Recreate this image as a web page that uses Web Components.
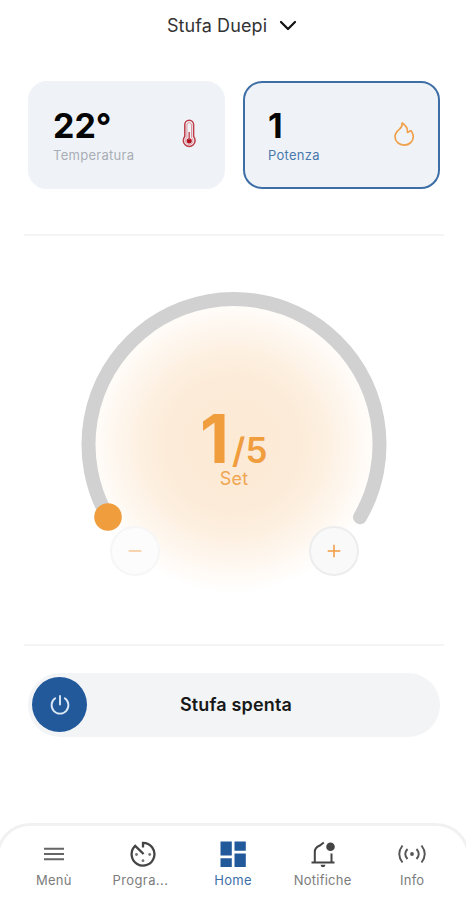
<!DOCTYPE html>
<html lang="it">
<head>
<meta charset="utf-8">
<title>Stufa Duepi</title>
<style>
html,body{margin:0;height:100%;background:#fff}
body{font-family:Inter,"Liberation Sans",sans-serif;overflow:hidden}
</style>
</head>
<body>
<stove-app></stove-app>
<script>
const define = (name, html) => {
  const t = document.createElement('template');
  t.innerHTML = html;
  customElements.define(name, class extends HTMLElement {
    constructor() {
      super();
      this.attachShadow({ mode: 'open' }).appendChild(t.content.cloneNode(true));
    }
  });
};

define('device-header', `
<style>
:host{display:flex;justify-content:center;align-items:center;height:52px;gap:12px;padding-right:2px;box-sizing:border-box;color:#333;font-size:18px;line-height:22px;letter-spacing:.1px}
svg{display:block}
</style>
<span><slot></slot></span>
<svg width="18" height="12" viewBox="0 0 18 12" fill="none" stroke="#111" stroke-width="2.2" stroke-linecap="round" stroke-linejoin="round"><path d="M2 2l7 7 7-7"/></svg>`);

define('stat-card', `
<style>
:host{display:flex;box-sizing:border-box;height:108px;border-radius:19px;background:#eff3f7;border:2px solid #eff3f7;padding:0 19px 0 23px;align-items:center;justify-content:space-between;color:#a9adb5}
:host([active]){border-color:#3d6fa6;color:#4a78ad}
.t{padding-top:2px}
.v{color:#050505;font-size:34px;line-height:36px;font-weight:700}
.l{font-size:13px;line-height:18px;letter-spacing:.28px;margin-top:2px}
::slotted([slot=icon]){margin-bottom:3px}
</style>
<div class="t"><div class="v"><slot name="value"></slot></div><div class="l"><slot></slot></div></div>
<slot name="icon"></slot>`);

define('thermo-icon', `
<style>:host{display:block}svg{display:block}</style>
<svg width="30" height="30" viewBox="0 0 30 30" fill="none" stroke="#bd3c48" stroke-width="1.500"><path d="M10.8 17.600V5.700a4.400 4.400 0 0 1 8.800 0v11.900a5.900 5.900 0 1 1-8.800 0z"/><path d="M12.900 18.600V6a2.300 2.300 0 0 1 4.600 0v12.600a3.800 3.800 0 1 1-4.600 0z" stroke-width=".9" stroke="#d98a91"/><circle cx="15.200" cy="21.800" r="2.600" fill="#b4101f" stroke="none"/><path d="M15.200 13v8" stroke="#c4525d" stroke-width="1.500"/></svg>`);

define('flame-icon', `
<style>:host{display:block}svg{display:block}</style>
<svg width="30" height="30" viewBox="0 0 30 30" fill="none" stroke="#f0a04b" stroke-width="1.700" stroke-linejoin="round" stroke-linecap="round"><path d="M13.200 4c.3 2.500-.8 4.300-2.700 6.100C8.200 12.100 6 14.100 6 17.500c0 5.100 4 8.600 9.100 8.600s9.200-3.500 9.200-8.300c0-2.700-.9-4.200-2.200-6.200l-3.600 1.800c.3-4.200-1.600-7.100-5.300-9.400z"/></svg>`);

define('round-button', `
<style>
:host{display:grid;place-items:center;box-sizing:border-box;width:50px;height:50px;border-radius:50%;border:2px solid #ededee;background:#f9f9fa}
:host([disabled]){border-color:#f7f6f6;background:#fdfcfc}
:host([disabled]) svg{opacity:.55}
:host([disabled]) .up{display:none}
svg{display:block}
</style>
<svg width="14" height="14" viewBox="0 0 14 14" stroke="#f0a04b" stroke-width="1.600"><path d="M.7 7h12.600"/><path class="up" d="M7 .7v12.600"/></svg>`);

define('power-dial', `
<style>
:host{display:grid;grid-template:310px / 310px;justify-content:center;height:408px;box-sizing:border-box;padding:53px 0 0 2px}
svg,.c,.b{grid-area:1/1}
svg{display:block;overflow:visible}
.c{display:flex;flex-direction:column;align-items:center;padding-top:121px;color:#f09d3e;z-index:1}
.n{display:flex;align-items:baseline;font-weight:700;height:58px;line-height:58px}
.big{font-size:67px}
.sm{font-size:35px;font-weight:600;letter-spacing:.3px;margin-left:3px;line-height:36px}
.s{font-size:18px;line-height:20px;margin-top:1px;color:#f0a551;letter-spacing:.2px}
.b{display:flex;justify-content:space-between;align-items:flex-start;padding:237px 30px 0 31px;z-index:1}
</style>
<svg width="310" height="310" viewBox="0 0 310 310">
<defs><radialGradient id="g"><stop offset="0" stop-color="#fcead5"/><stop offset=".45" stop-color="#fcebd8"/><stop offset=".62" stop-color="#fdf0e1"/><stop offset=".8" stop-color="#fef7ef"/><stop offset=".93" stop-color="#fffcf9"/><stop offset="1" stop-color="#fff"/></radialGradient></defs>
<circle cx="154" cy="155" r="149" fill="url(#g)"/>
<path d="M29 228.250A145.500 145.500 0 1 1 281 228.250" fill="none" stroke="#d1d1d1" stroke-width="14" stroke-linecap="round"/>
<circle cx="29" cy="228" r="13.800" fill="#f09d3e"/>
</svg>
<div class="c"><div class="n"><span class="big">1</span><span class="sm">/5</span></div><div class="s">Set</div></div>
<div class="b"><round-button disabled></round-button><round-button></round-button></div>`);

define('power-slider', `
<style>
:host{display:grid;grid-template-columns:55px 1fr 51px;align-items:center;height:64px;box-sizing:border-box;padding:0 4px 1px;border-radius:32px;background:#f2f4f6}
.k{width:55px;height:55px;border-radius:50%;background:#22599b;display:grid;place-items:center}
.t{text-align:center;font-size:18px;font-weight:600;color:#181818;letter-spacing:.15px}
svg{display:block}
</style>
<div class="k"><svg width="22" height="22" viewBox="0 0 22 22" fill="none" stroke="#dbe8f5" stroke-width="1.900" stroke-linecap="round"><path d="M11 2v8.500M6.200 4.300a8.400 8.400 0 1 0 9.600 0"/></svg></div>
<div class="t"><slot></slot></div>`);

define('nav-item', `
<style>
:host{display:flex;flex-direction:column;align-items:center;gap:3px;color:#7c7c7c;font-size:13px;line-height:18px;letter-spacing:.25px;white-space:nowrap}
:host([active]){color:#3e70a8}
:host([clipped]) span{margin-right:6px;letter-spacing:.4px}
::slotted(svg){display:block}
</style>
<slot name="icon"></slot><span><slot></slot></span>`);

define('nav-bar', `
<style>
:host{display:grid;grid-template-columns:repeat(5,89.600px);justify-content:center;box-sizing:border-box;height:77px;margin:0 -4px;border:3px solid #f1f1f1;border-bottom:0;border-radius:34px 34px 0 0;padding-top:14px;background:#fff}
</style><slot></slot>`);

define('stove-app', `
<style>
:host{display:flex;flex-direction:column;height:900px;overflow:hidden}
.cards{display:grid;grid-template-columns:197px 197px;gap:18px;padding:29px 0 45px 28px}
.hr{height:2px;background:#f4f4f5;margin:0 22px 0 24px;flex:none}
power-slider{margin:27px 26px 0 28px;flex:none}
nav-bar{margin-top:auto}
device-header,power-dial{flex:none}
</style>
<device-header>Stufa Duepi</device-header>
<div class="cards">
<stat-card><span slot="value">22°</span>Temperatura<thermo-icon slot="icon"></thermo-icon></stat-card>
<stat-card active><span slot="value">1</span>Potenza<flame-icon slot="icon"></flame-icon></stat-card>
</div>
<div class="hr"></div>
<power-dial></power-dial>
<div class="hr"></div>
<power-slider>Stufa spenta</power-slider>
<nav-bar>
<nav-item><svg slot="icon" width="28" height="28" viewBox="0 0 28 28" stroke="#666" stroke-width="2"><path d="M4 8.700h20M4 14h20M4 19.300h20"/></svg>Menù</nav-item>
<nav-item clipped><svg slot="icon" width="28" height="28" viewBox="0 0 28 28" fill="none" stroke="#444" stroke-width="2.300"><path d="M14 7.500V2.800A11.400 11.400 0 1 1 6.200 5.900L14.600 14"/><g fill="#777" stroke="none"><circle cx="7.500" cy="14.500" r="1.400"/><circle cx="20.700" cy="14.500" r="1.400"/><circle cx="14" cy="20.700" r="1.400"/></g></svg>Progra...</nav-item>
<nav-item active><svg slot="icon" width="28" height="28" viewBox="0 0 28 28" fill="#22599b"><path d="M1.500 1.500h11.300v14H1.500zM15.500 1.500h11.300v9.300H15.500zM1.500 18.200h11.300v8.800H1.500zM15.500 13.500h11.300V27H15.500z"/></svg>Home</nav-item>
<nav-item><svg slot="icon" width="28" height="28" viewBox="0 0 28 28" fill="none" stroke="#444" stroke-width="2"><path d="M2.500 22.500h23M5.800 22.500v-10.500q0-4.500 5-6.500l4-3M22.500 13.500v9"/><circle cx="21.500" cy="6.800" r="4.300" fill="#444" stroke="none"/><path d="M11.500 24.800h5q-.5 2.500-2.500 2.500t-2.500-2.500z" fill="#444" stroke="none"/></svg>Notifiche</nav-item>
<nav-item><svg slot="icon" width="28" height="28" viewBox="0 0 28 28" fill="none" stroke="#555" stroke-width="1.900"><path d="M4.500 5.500q-6.500 8.500 0 17M23.500 5.500q6.500 8.500 0 17M9.500 9q-4.500 5 0 10M18.500 9q4.500 5 0 10"/><circle cx="14" cy="14" r="1.900" fill="#555" stroke="none"/></svg>Info</nav-item>
</nav-bar>`);
</script>
</body>
</html>
